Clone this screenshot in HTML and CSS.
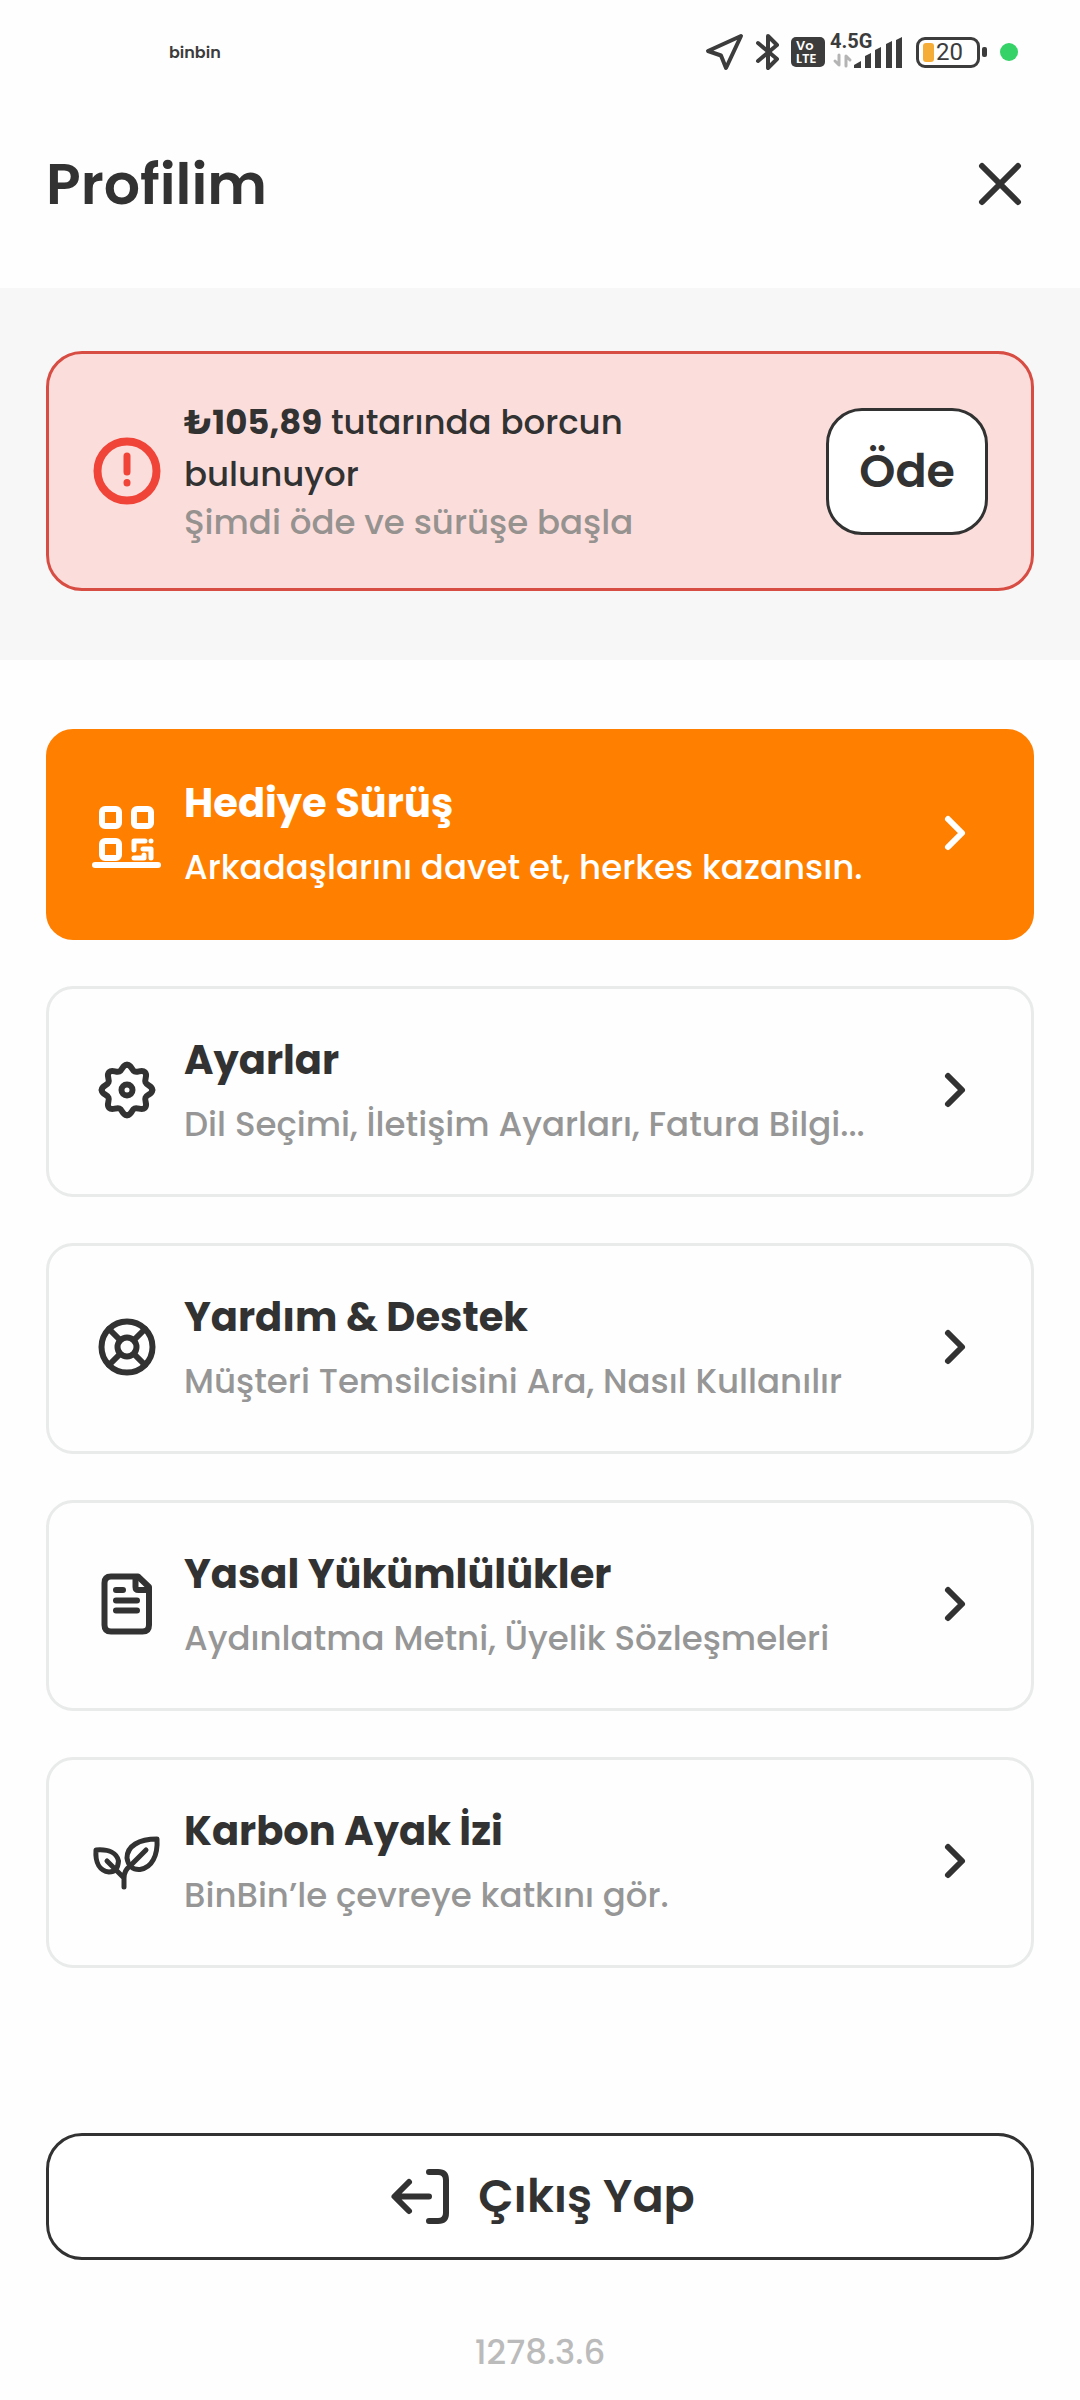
FILE: index.html
```html
<!DOCTYPE html>
<html lang="tr">

<head>
    <meta charset="UTF-8">
    <meta name="viewport" content="width=device-width, initial-scale=1.0">
    <title>Profilim</title>
    <link rel="stylesheet" href="styles.css">
</head>

<body>

    <!-- Status bar -->
    <div class="status-bar">
        <span class="carrier">binbin</span>
        <div class="status-icons">
            <svg class="nav-icon" width="40" height="40" viewBox="0 0 40 40">
                <path d="M36 4L3 19L16 23.500L21 36Z" />
            </svg>
            <svg class="bluetooth" width="26" height="40" viewBox="0 0 26 40">
                <path d="M3 11L22 27L13 36V4L22 13L3 29" />
            </svg>
            <span class="volte"><span>Vo</span><span>LTE</span></span>
            <svg class="signal" width="74" height="48" viewBox="0 -6 74 48">
                <text x="0" y="14">4.5G</text>
                <path class="data" d="M9 21V31L5 27M16 32V22L20 26" />
                <path d="M24 34V31L31 27V34ZM35 34V22L41 19V34ZM45 34V16L51 13V34ZM56 34V10L62 7V34ZM66 34V6L72 3V34Z" />
            </svg>
            <div class="battery">
                <div class="battery-body"><span class="battery-fill"></span>20</div>
                <span class="battery-cap"></span>
            </div>
            <span class="privacy-dot"></span>
        </div>
    </div>

    <!-- Header -->
    <header class="header">
        <h1>Profilim</h1>
        <button class="close-button" type="button" aria-label="Kapat">
            <svg width="50" height="50" viewBox="0 0 50 50">
                <path d="M7 7L43 43M43 7L7 43" />
            </svg>
        </button>
    </header>

    <!-- Debt -->
    <section class="debt-section">
        <div class="debt-card">
            <svg class="icon alert" viewBox="0 0 70 70">
                <circle cx="35" cy="35" r="29.500" />
                <path class="alert-mark" d="M35 20V36M35 46.500V47" />
            </svg>
            <div class="debt-text">
                <p class="debt-amount"><strong>₺105,89</strong> tutarında borcun bulunuyor</p>
                <p class="debt-note">Şimdi öde ve sürüşe başla</p>
            </div>
            <button class="pay-button" type="button">Öde</button>
        </div>
    </section>

    <!-- Menu -->
    <nav class="menu">
        <a class="menu-item highlight" href="#hediye">
            <svg class="icon" viewBox="0 -2 70 70">
                <rect x="10" y="9" width="17" height="17" rx="3" />
                <rect x="42" y="9" width="17" height="17" rx="3" />
                <rect x="10" y="41" width="17" height="17" rx="3" />
                <path class="qr" d="M53 41H42V50M59 41V41M51 49H59V58M42 58H52V55" />
                <path d="M3 65H66" />
            </svg>
            <span class="menu-text">
                <span class="menu-title">Hediye Sürüş</span>
                <span class="menu-desc">Arkadaşlarını davet et, herkes kazansın.</span>
            </span>
            <svg class="chevron" viewBox="0 0 40 40"><path d="M13 6L27 20L13 34" /></svg>
        </a>

        <a class="menu-item" href="#ayarlar">
            <svg class="icon" viewBox="0 0 70 70">
                <path id="gear" d="M35 9.700C39.500 9.700 39.400 15.200 42.600 16.500C45.900 17.900 49.700 13.900 52.900 17.100C56.100 20.300 52.100 24.100 53.500 27.400C54.800 30.600 60.300 30.500 60.300 35" />
                <use href="#gear" transform="rotate(90 35 35)" />
                <use href="#gear" transform="rotate(180 35 35)" />
                <use href="#gear" transform="rotate(270 35 35)" />
                <circle cx="35" cy="35" r="5.500" />
            </svg>
            <span class="menu-text">
                <span class="menu-title">Ayarlar</span>
                <span class="menu-desc">Dil Seçimi, İletişim Ayarları, Fatura Bilgi...</span>
            </span>
            <svg class="chevron" viewBox="0 0 40 40"><path d="M13 6L27 20L13 34" /></svg>
        </a>

        <a class="menu-item" href="#yardim">
            <svg class="icon" viewBox="0 0 70 70">
                <circle cx="35" cy="35" r="25.500" />
                <circle cx="35" cy="35" r="9.500" />
                <path d="M17 17L28 28M53 17L42 28M17 53L28 42M53 53L42 42" />
            </svg>
            <span class="menu-text">
                <span class="menu-title">Yardım &amp; Destek</span>
                <span class="menu-desc">Müşteri Temsilcisini Ara, Nasıl Kullanılır</span>
            </span>
            <svg class="chevron" viewBox="0 0 40 40"><path d="M13 6L27 20L13 34" /></svg>
        </a>

        <a class="menu-item" href="#yasal">
            <svg class="icon" viewBox="0 -1 70 70">
                <path d="M46 6.500H19Q12.500 6.500 12.500 13V55Q12.500 61.500 19 61.500H50.500Q57 61.500 57 55V17Z" />
                <path d="M43.500 8V17Q43.500 20 46.500 20H56M24 20H31M24 30.500H45M24 40.500H45" />
            </svg>
            <span class="menu-text">
                <span class="menu-title">Yasal Yükümlülükler</span>
                <span class="menu-desc">Aydınlatma Metni, Üyelik Sözleşmeleri</span>
            </span>
            <svg class="chevron" viewBox="0 0 40 40"><path d="M13 6L27 20L13 34" /></svg>
        </a>

        <a class="menu-item" href="#karbon">
            <svg class="icon leaf" viewBox="0 -1 70 70">
                <path d="M4 23C17 22 25 26 26.500 34C26 41 23 45 17 45C8 44 3 36 4 23Z" />
                <path d="M65 12C47 12 35 19 35 31C36 39 41 43 48 42.500C60 41 66 28 65 12Z" />
                <path d="M32 60V51C32 46 34 42 38 39L54 23M15 34L32 51" />
            </svg>
            <span class="menu-text">
                <span class="menu-title">Karbon Ayak İzi</span>
                <span class="menu-desc">BinBin’le çevreye katkını gör.</span>
            </span>
            <svg class="chevron" viewBox="0 0 40 40"><path d="M13 6L27 20L13 34" /></svg>
        </a>
    </nav>

    <!-- Footer -->
    <footer class="footer">
        <button class="logout-button" type="button">
            <svg class="icon" viewBox="0 0 70 70">
                <path d="M24 20L9.500 34.500L24 49M10 34.500H44M44 10H53Q61 10 61 18V51Q61 59 53 59H44" />
            </svg>
            Çıkış Yap
        </button>
        <p class="version">1278.3.6</p>
    </footer>

</body>

</html>
```
FILE: styles.css
```css
* {
    margin: 0;
    padding: 0;
    box-sizing: border-box;
}

body {
    font-family: Poppins, Inter, sans-serif;
    background-color: #fefefe;
    color: #323232;
}

button {
    font-family: inherit;
    color: inherit;
    cursor: pointer;
}

svg {
    flex-shrink: 0;
    fill: none;
    stroke: currentColor;
    stroke-linecap: round;
    stroke-linejoin: round;
}

/* Status bar */
.status-bar {
    display: flex;
    justify-content: space-between;
    align-items: center;
    height: 104px;
    padding: 0 62px 0 169px;
    color: #3c3c3c;
}

.carrier {
    font-size: 16px;
    font-weight: 600;
}

.status-icons {
    display: flex;
    align-items: center;
}

.nav-icon {
    margin-right: 10px;
    stroke-width: 4;
}

.bluetooth {
    margin-right: 10px;
    stroke-width: 4;
}

.volte {
    display: flex;
    flex-direction: column;
    width: 34px;
    height: 30px;
    margin-right: 5px;
    padding: 2px 5px;
    border-radius: 5px;
    background-color: #3c3c3c;
    color: white;
    font-size: 13px;
    font-weight: 600;
    line-height: 13px;
}

.signal {
    margin-right: 12px;
    stroke: none;
    fill: currentColor;
}

.signal text {
    font-family: Roboto, sans-serif;
    font-size: 20px;
    font-weight: 700;
}

.signal .data {
    fill: none;
    stroke: #b4b4b4;
    stroke-width: 3;
}

.battery {
    display: flex;
    align-items: center;
    gap: 2px;
    margin-right: 13px;
}

.battery-body {
    display: flex;
    align-items: center;
    gap: 2px;
    width: 64px;
    height: 31px;
    padding-left: 4px;
    border: 3px solid #3c3c3c;
    border-radius: 9px;
    font-family: Roboto, sans-serif;
    font-size: 24px;
    line-height: 25px;
}

.battery-fill {
    width: 11px;
    height: 19px;
    border-radius: 3px;
    background-color: #f6ad37;
}

.battery-cap {
    width: 5px;
    height: 10px;
    border-radius: 2px;
    background-color: #3c3c3c;
}

.privacy-dot {
    width: 18px;
    height: 18px;
    border-radius: 50%;
    background-color: #35d267;
}

/* Header */
.header {
    display: flex;
    justify-content: space-between;
    align-items: center;
    padding: 45px 55px 69px 46px;
}

.header h1 {
    font-size: 57px;
    font-weight: 600;
    line-height: 70px;
}

.close-button {
    display: flex;
    border: none;
    background: none;
    stroke-width: 6;
}

/* Debt */
.debt-section {
    padding: 63px 46px 69px;
    background-color: #f7f7f7;
}

.debt-card {
    display: flex;
    align-items: center;
    gap: 22px;
    padding: 42px 43px;
    border: 3px solid #d84d43;
    border-radius: 36px;
    background-color: #fbdedc;
}

.icon {
    width: 70px;
    height: 70px;
    stroke-width: 6;
}

.alert {
    color: #f04438;
    stroke-width: 8;
}

.alert-mark {
    stroke-width: 7;
}

.debt-text {
    flex: 1;
    padding: 0 60px 2px 0;
    font-size: 34px;
    font-weight: 500;
}

.debt-amount {
    line-height: 52px;
}

.debt-note {
    line-height: 44px;
    color: #969290;
}

.pay-button,
.logout-button {
    height: 127px;
    border: 3px solid #323232;
    border-radius: 36px;
    background-color: white;
    font-size: 46px;
    font-weight: 600;
}

.pay-button {
    padding: 0 30px;
}

/* Menu */
.menu {
    display: flex;
    flex-direction: column;
    gap: 46px;
    padding: 69px 46px 0;
}

.menu-item {
    display: flex;
    align-items: center;
    gap: 22px;
    padding: 37px 56px 40px 43px;
    border: 3px solid #e9eaea;
    border-radius: 27px;
    color: #323232;
    text-decoration: none;
}

.menu-text {
    display: flex;
    flex: 1;
    flex-direction: column;
    min-width: 0;
    white-space: nowrap;
}

.menu-title {
    font-size: 40px;
    font-weight: 700;
    line-height: 68px;
}

.menu-desc {
    font-size: 34px;
    font-weight: 500;
    line-height: 60px;
    color: #969696;
}

.chevron {
    width: 40px;
    height: 40px;
    stroke-width: 6;
}

.highlight {
    border-color: #ff7f00;
    background-color: #ff7f00;
    color: white;
}

.highlight .menu-desc {
    color: white;
}

.qr {
    stroke-width: 5;
}

.leaf {
    stroke-width: 5;
}

/* Footer */
.footer {
    padding: 165px 46px 0;
}

.logout-button {
    display: flex;
    justify-content: center;
    align-items: center;
    gap: 23px;
    width: 100%;
}

.version {
    margin-top: 66px;
    font-size: 34px;
    font-weight: 500;
    line-height: 52px;
    text-align: center;
    color: #bbbbbb;
}
```
